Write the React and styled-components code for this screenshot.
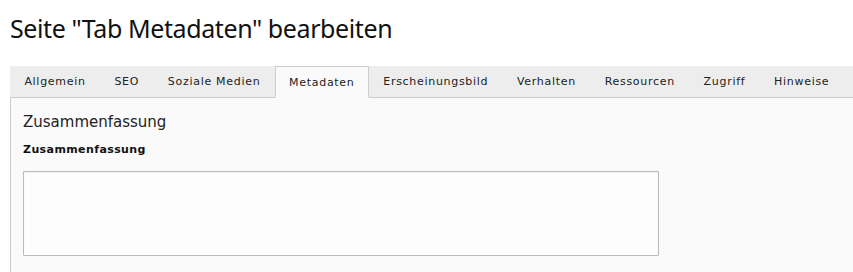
import styled, { createGlobalStyle } from 'styled-components'

const GlobalStyle = createGlobalStyle`
    html, body {
        margin: 0;
        padding: 0;
        background: #ffffff;
    }
    body {
        font-family: "DejaVu Sans", Verdana, sans-serif;
        color: #333333;
    }
`

const Page = styled.div`
    padding: 0 0 0 10px;
    width: 843px;
    overflow: hidden;
`

const Title = styled.h1`
    margin: 0;
    padding-top: 11px;
    height: 66px;
    box-sizing: border-box;
    font-family: "Noto Sans", "Open Sans", sans-serif;
    font-weight: 400;
    font-size: 25px;
    line-height: 34px;
    letter-spacing: -0.4px;
    color: #111111;
`

const TabBar = styled.ul`
    display: flex;
    margin: 0;
    padding: 0;
    list-style: none;
    height: 31px;
    background: #ededed;
    border-bottom: 1px solid #cccccc;
`

const Tab = styled.li`
    display: flex;
    align-items: center;
    padding: 0 13.4px;
    margin-bottom: ${props => props.$active ? '-1px' : '0'};
    font-size: 11px;
    letter-spacing: 0.7px;
    color: #222222;
    white-space: nowrap;
    background: ${props => props.$active ? '#fafafa' : 'transparent'};
    border: 1px solid ${props => props.$active ? '#cccccc' : 'transparent'};
    border-bottom: ${props => props.$active ? '1px solid #fafafa' : '1px solid transparent'};
    border-top: ${props => props.$active ? '1px solid #cccccc' : 'none'};
`

const Panel = styled.div`
    background: #fafafa;
    border-left: 1px solid #cccccc;
    padding: 14px 12px 16px;
`

const SectionTitle = styled.h2`
    margin: 0;
    font-size: 15px;
    font-weight: 400;
    line-height: 20px;
    color: #222222;
`

const FieldLabel = styled.label`
    display: block;
    margin-top: 11px;
    font-size: 11px;
    font-weight: 700;
    letter-spacing: 0.4px;
    color: #111111;
`

const TextArea = styled.textarea`
    display: block;
    margin-top: 15px;
    width: 636px;
    height: 85px;
    box-sizing: border-box;
    resize: none;
    background: #fdfdfd;
    border: 1px solid #bbbbbb;
    border-radius: 1px;
    box-shadow: inset 0 1px 2px rgba(0, 0, 0, 0.06);
    outline: none;
`

const tabs = ['Allgemein', 'SEO', 'Soziale Medien', 'Metadaten', 'Erscheinungsbild', 'Verhalten', 'Ressourcen', 'Zugriff', 'Hinweise']

function App(){
    return (
        <Page>
            <GlobalStyle/>
            <Title>Seite "Tab Metadaten" bearbeiten</Title>
            <TabBar>
                {tabs.map(t => (
                    <Tab key={t} $active={t === 'Metadaten'}>{t}</Tab>
                ))}
            </TabBar>
            <Panel>
                <SectionTitle>Zusammenfassung</SectionTitle>
                <FieldLabel>Zusammenfassung</FieldLabel>
                <TextArea/>
            </Panel>
        </Page>
    )
}

export default App
